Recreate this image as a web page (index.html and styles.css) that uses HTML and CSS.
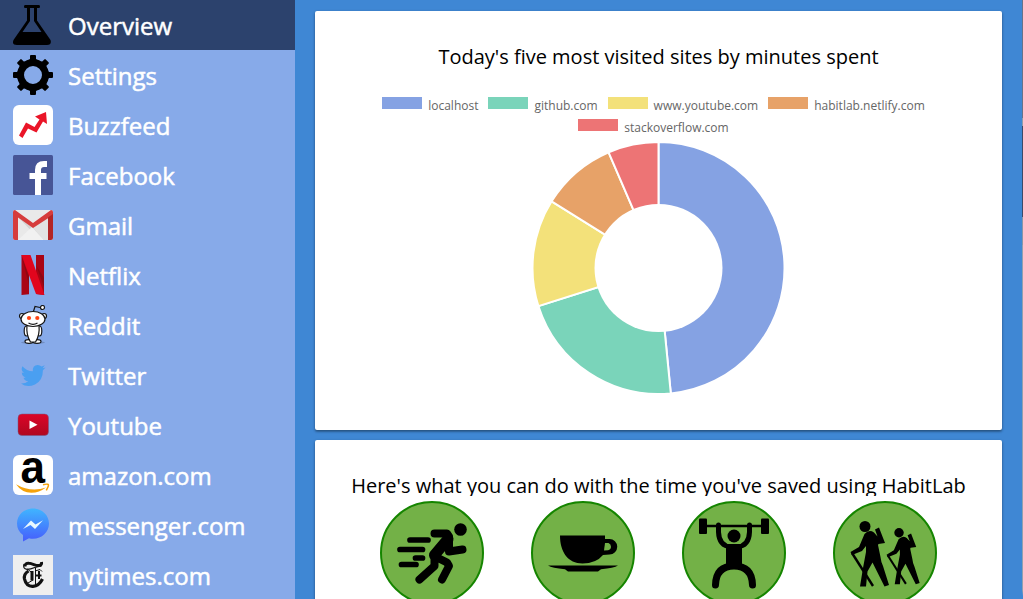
FILE: index.html
```html
<!DOCTYPE html>
<html lang="en">
<head>
<meta charset="utf-8">
<title>HabitLab</title>
<link rel="stylesheet" href="styles.css">
</head>
<body>
<div class="app">
<nav class="sidebar">
  <a class="item active"><svg class="icon" viewBox="0 0 40 40"><path fill-rule="evenodd" d="M12 0h14q1 0 1 1.500t-1 1.500h-2v12.500l13.500 19.500q1.500 5-3.500 5H4q-5.500 0-3.500-5L14 15.500V3h-2q-1 0-1-1.500T12 0zM17 3v13L9.500 27h19L21 16V3z"/></svg><span class="label">Overview</span></a>
  <a class="item"><svg class="icon" viewBox="0 0 40 40"><circle cx="20" cy="20" r="12.500" fill="none" stroke="#000" stroke-width="7"/><g id="teeth"><path id="tooth" d="M15 7l2-3V1q0-1 1-1h4q1 0 1 1v3l2 3z"/><use href="#tooth" transform="rotate(45 20 20)"/><use href="#tooth" transform="rotate(90 20 20)"/><use href="#tooth" transform="rotate(135 20 20)"/></g><use href="#teeth" transform="rotate(180 20 20)"/></svg><span class="label">Settings</span></a>
  <a class="item"><svg class="icon" viewBox="0 0 40 40"><rect width="40" height="40" rx="6" fill="#fff"/><path fill="#ea1528" d="M6 30.500L13 17.500 21.500 22 26.500 14.500 22 11.500 33 7 34 19 30 16.500 23.500 27.500 15 23.500 9.500 33z"/></svg><span class="label">Buzzfeed</span></a>
  <a class="item"><svg class="icon" viewBox="0 0 40 40"><rect width="40" height="40" rx="1.500" fill="#475596"/><path fill="none" stroke="#fff" stroke-width="6" d="M25 40V15q0-6 6-6h3M16.500 21H33.500"/></svg><span class="label">Facebook</span></a>
  <a class="item"><svg class="icon" viewBox="0 0 40 40"><rect y="5" width="40" height="30" rx="2" fill="#e9e9e9"/><path fill="#d3d3d3" d="M5 12l15 11L35 13v22h-8z"/><path fill="#f1f1f1" d="M5 35l14-13 12 13z"/><path fill="#e2e2e2" d="M20 23L35 13v22h-4z"/><path fill="#d63c3c" d="M0 7q0-2 2-2L20 18 38 5q2 0 2 2v3L20 23 5 12.500V35H2q-2 0-2-2z"/><path fill="#b32525" d="M35 12.500L40 9v24q0 2-2 2h-3z"/></svg><span class="label">Gmail</span></a>
  <a class="item"><svg class="icon" viewBox="0 0 40 40"><path fill="#a90414" d="M8.500 0H16v39.200L8.500 40zM23 0h8v40l-8-1z"/><path fill="#8c0713" d="M8.500 1L16 22v8zM23 10l8 22v-9z"/><path fill="#e1051d" d="M8.500 0H17.500L31.500 40 23 39z"/></svg><span class="label">Netflix</span></a>
  <a class="item"><svg class="icon" viewBox="0 0 40 40"><ellipse cx="20" cy="37.500" rx="12" ry="1.500" fill="#708cc0"/><g fill="#fff" stroke="#161616" stroke-width="1.200"><path fill="none" d="M20 8l2-6.500 5 1"/><circle cx="29.500" cy="2.500" r="2"/><ellipse cx="16" cy="36.500" rx="4" ry="1.800"/><ellipse cx="24" cy="36.500" rx="4" ry="1.800"/><ellipse cx="13.500" cy="26" rx="2.300" ry="5"/><ellipse cx="26.500" cy="26" rx="2.300" ry="5"/><path d="M14 20h12q1 10-3.500 17h-5Q13 30 14 20z"/><circle cx="9" cy="11" r="2.500"/><circle cx="31" cy="11" r="2.500"/><ellipse cx="20" cy="14" rx="12" ry="7.500"/><path fill="none" d="M15.500 18q4.500 2.700 9 0"/></g><g fill="#ff4414"><circle cx="16" cy="13" r="2.100"/><circle cx="24.300" cy="13" r="2.100"/></g></svg><span class="label">Reddit</span></a>
  <a class="item"><svg class="icon" viewBox="0 0 40 40"><path fill="#4a9ff1" d="M8 28.500q4 .3 7.300-2.200-3.700-.5-4.800-3.600h2.300q-4-1.400-4-5.200l2.200.6Q7.300 15 9.500 11.200q4 5 10.300 5.100-.6-5.800 5-6.300 2 0 3.800 1.500l3.200-1.200-2.200 2.900 3-.8-2.700 2.900Q30 25.500 22 29.500q-8 3.500-14-1z"/></svg><span class="label">Twitter</span></a>
  <a class="item"><svg class="icon" viewBox="0 0 40 40"><defs><linearGradient id="yt" x2="0" y2="1"><stop stop-color="#dc0528"/><stop offset="1" stop-color="#af0820"/></linearGradient></defs><rect x="5" y="9" width="30.500" height="21.500" rx="4" fill="url(#yt)" stroke="#765983" stroke-width=".5"/><path fill="#fff" d="M16.500 15.500l8 4.200-8 4.300z"/></svg><span class="label">Youtube</span></a>
  <a class="item"><svg class="icon" viewBox="0 0 40 40"><rect width="40" height="40" rx="6" fill="#fff"/><text class="amazon-a" x="7.500" y="28" textLength="24.500" lengthAdjust="spacingAndGlyphs">a</text><path fill="#f5a20a" d="M3 29.200Q18 38 33 32.500q-7 5.300-14.500 5.300Q9 37.800 3 29.200z"/><path fill="none" stroke="#f5a20a" stroke-width="1.500" d="M30 29.800q7-2 5 2l-1.700 3.500"/></svg><span class="label">amazon.com</span></a>
  <a class="item"><svg class="icon" viewBox="0 0 40 40"><defs><linearGradient id="ms" x2="0" y2="1"><stop stop-color="#40b5ff"/><stop offset="1" stop-color="#465dfc"/></linearGradient></defs><path fill="url(#ms)" d="M20 3.500C11 3.500 4 10 4 18.500q0 7 6 11.500v6.500l6-3.200q2 .5 4 .5c9 0 16-7 16-15.300S29 3.500 20 3.500z"/><path fill="#e9f9ff" d="M10 24l8-8.500 4.500 4L30 15.200 22 24l-4.500-4z"/></svg><span class="label">messenger.com</span></a>
  <a class="item"><svg class="icon" viewBox="0 0 40 40"><rect width="40" height="40" fill="#efefef"/><g fill="none" stroke="#111"><path stroke-width="3" d="M12 11.500q0-3.500 4-3.200c4 .2 7 3 10.500 2.200q2.500-.7 2-3.500"/><path stroke-width="1.200" d="M11 9q-1.500 5 3 5.300 4 0 7-1.500 4-1.300 7.500-2"/><path stroke-width="3.200" d="M15.500 16q-5 3-4 8c1.500 6.500 5 7.500 8.500 7.300q6-.3 9.500-7.300"/><path stroke-width="1" d="M14.500 14l3.500 3M22.500 13v18M15 28l5-3M22 16l5-1.500 2 2"/><path stroke-width="3" d="M19 16v9.500"/><path stroke-width="2" d="M26 16v8M23 20.500h5.500"/></g></svg><span class="label">nytimes.com</span></a>
</nav>
<main class="content">
  <section class="card chart-card">
    <h2 class="title">Today's five most visited sites by minutes spent</h2>
    <div class="legend">
      <div class="row">
        <span class="key"><i class="swatch blue"></i><span>localhost</span></span>
        <span class="key"><i class="swatch green"></i><span>github.com</span></span>
        <span class="key"><i class="swatch yellow"></i><span>www.youtube.com</span></span>
        <span class="key"><i class="swatch orange"></i><span>habitlab.netlify.com</span></span>
      </div>
      <div class="row">
        <span class="key"><i class="swatch red"></i><span>stackoverflow.com</span></span>
      </div>
    </div>
    <svg class="donut" viewBox="-126.500 -127 254 254"><g stroke="#fff" stroke-width="2" stroke-linejoin="round"><path fill="#85a2e3" d="M0 0V-126A126 126 0 0 1 12.300 125.400z"/><path fill="#7ad4ba" d="M0 0L12.300 125.400A126 126 0 0 1-120.100 38.100z"/><path fill="#f3e17a" d="M0 0L-120.100 38.100A126 126 0 0 1-106.900-66.700z"/><path fill="#e7a268" d="M0 0L-106.900-66.700A126 126 0 0 1-49.900-115.700z"/><path fill="#ed7475" d="M0 0L-49.900-115.700A126 126 0 0 1 0-126z"/></g><circle r="64" fill="#fff"/></svg>
  </section>
  <section class="card saved-card">
    <h2 class="title clipped">Here's what you can do with the time you've saved using HabitLab</h2>
    <div class="activities">
      <svg class="activity" viewBox="0 0 104 104"><circle class="disc" cx="52" cy="52" r="51"/><circle cx="80.500" cy="28.500" r="6.300"/><g fill="none" stroke="#000" stroke-linecap="round" stroke-linejoin="round"><path stroke-width="5.700" d="M30 39H48M20 48.500H42.500M35.500 57H42.500M21.500 63.500H36"/><path stroke-width="8" d="M54.500 32.500H67L69 35.500V50.500L82.500 48.500M54 55L67 61.500 69 65 62 78.500M54.500 55V65L39.500 78.500"/><path stroke-width="11" d="M68 38L54.500 54"/></g></svg>
      <svg class="activity" viewBox="0 0 104 104"><circle class="disc" cx="52" cy="52" r="51"/><path d="M29 34.500H74V38h4.500a7.500 7.500 0 0 1 0 15.500l-6.500.5Q65 62.500 51.500 62.500C37 62.500 29 51 29 34.500z"/><path fill="#73b147" d="M74 42h3.500q2.500 1 2.500 3.700t-3 3.500l-4 .3z"/><path d="M17 64.500H87q-4 2.500-17 3.700l-3 2.300H37l-3-2.300Q21 67 17 64.500z"/></svg>
      <svg class="activity" viewBox="0 0 104 104"><circle class="disc" cx="52" cy="52" r="51"/><circle cx="52" cy="35" r="6.500"/><rect x="17" y="17.500" width="8" height="15.500" rx="1"/><rect x="79" y="17.500" width="8" height="15.500" rx="1"/><path d="M44 43H60V66H44z"/><g fill="none" stroke="#000"><path stroke-width="2.500" d="M24 25H80"/><path stroke-width="5" stroke-linecap="round" d="M36.500 24V31Q37 45 49 46H55Q67 45 67.500 31V24"/><path stroke-width="7" stroke-linecap="round" d="M33.500 84Q34 65 52 65 70 65 70.500 84"/></g></svg>
      <svg class="activity" viewBox="0 0 104 104"><circle class="disc" cx="52" cy="52" r="51"/><g id="hiker"><circle cx="32" cy="25.500" r="5.500"/><path d="M31.500 33q4.500-5 9.500-1.500l3.500 4-2.500-7 4-2 6 15.500-6.500 1-.5 1 2.500 12q.5 5 2.500 9l6 19-4.500 1.500-12-24-5 9-1.500 15h-6L30 67l3-16 0-6-4 5-10 4-1.500-3 8.500-5z"/><path fill="none" stroke="#000" stroke-width="2.400" d="M19 52L40 85"/></g><use href="#hiker" transform="translate(38.500 9.800) scale(.86)"/></svg>
    </div>
  </section>
</main>
<div class="edge"></div>
</div>
</body>
</html>
```
FILE: styles.css
```css
* { box-sizing: border-box; }
body { margin: 0; overflow: hidden; font-family: "Open Sans", sans-serif; }
.app { display: flex; width: 1023px; height: 599px; overflow: hidden; background: #3f87d4; }
.sidebar { width: 295px; flex: none; background: #87aae9; }
.item { display: flex; align-items: center; gap: 15px; height: 50px; padding-left: 13px; color: #fff; }
.active { background: #2c426d; }
.icon { width: 40px; height: 40px; flex: none; }
.label { font-size: 24px; font-weight: 500; line-height: 34px; padding-top: 1px; white-space: nowrap; -webkit-text-stroke: .5px #fff; }
.amazon-a { font: bold 47px "Liberation Sans", sans-serif; }
.content { flex: none; width: 727px; padding: 11px 20px 0; display: flex; flex-direction: column; gap: 10px; }
.card { width: 687px; background: #fff; border-radius: 2px; box-shadow: 0 2px 2px rgba(0,0,0,.2), 0 1px 3px rgba(0,0,0,.3); flex: none; display: flex; flex-direction: column; align-items: center; }
.chart-card { height: 419px; }
.saved-card { height: 220px; }
.title { margin: 32px 0 0; color: #000; font-size: 20px; font-weight: 400; line-height: 28px; white-space: nowrap; }
.clipped { height: 24px; overflow: hidden; }
.legend { display: flex; flex-direction: column; gap: 6px; margin-top: 26px; height: 44px; padding-right: 10px; }
.row { display: flex; justify-content: center; gap: 10px; height: 16px; }
.key { display: flex; gap: 6px; font-size: 12px; line-height: 18px; height: 18px; color: #666; white-space: nowrap; }
.swatch { width: 40px; height: 12px; }
.blue { background: #85a2e3; }
.green { background: #7ad4ba; }
.yellow { background: #f3e17a; }
.orange { background: #e7a268; }
.red { background: #ed7475; }
.donut { width: 254px; height: 254px; }
.activities { display: flex; gap: 47px; margin-top: 5px; }
.activity { width: 104px; height: 104px; }
.disc { fill: #73b147; stroke: #158500; stroke-width: 2; }
.edge { width: 1px; background: linear-gradient(#65738b 0 118px, #8e9cac 118px 126px, #3c4a69 126px 217px, #8796a8 217px 245px, #91a0b0 245px 590px, #3f87d4 596px); }
```
